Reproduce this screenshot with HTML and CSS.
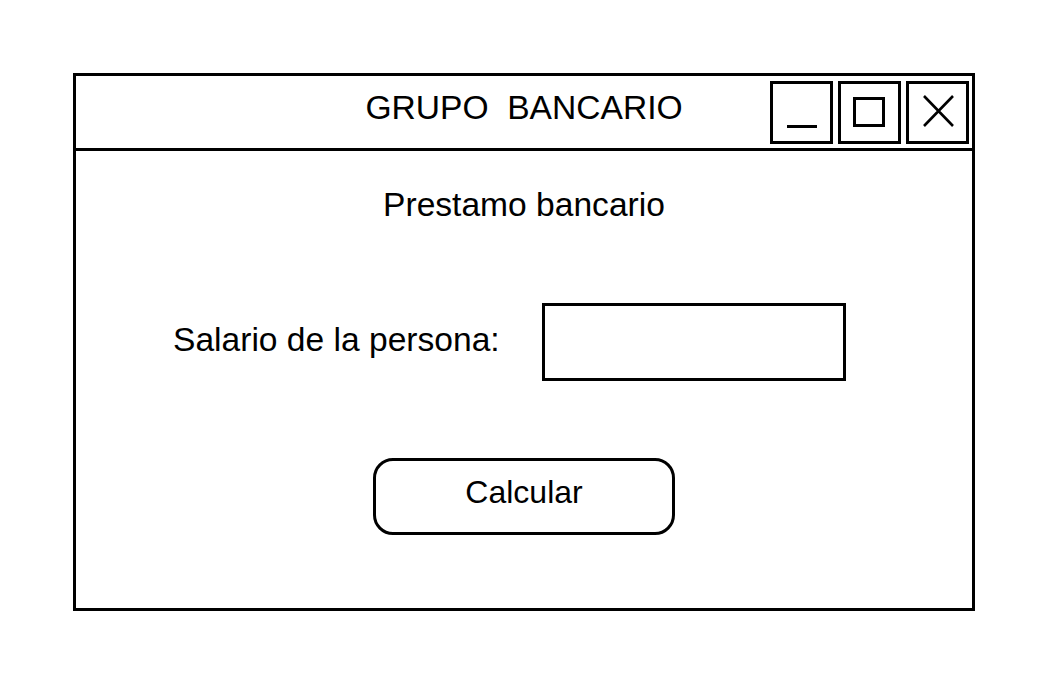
FILE: index.html
```html
<!DOCTYPE html>
<html lang="es">
<head>
    <meta charset="UTF-8">
    <meta name="viewport" content="width=device-width, initial-scale=1.0">
    <title>Grupo Bancario</title>
    <link rel="stylesheet" href="styles.css">
</head>
<body>
    <div class="window">
        <div class="titlebar">
            <div class="title">GRUPO&nbsp; BANCARIO</div>
            <div class="controls">
                <button class="ctrl" aria-label="Minimizar">
                    <svg viewBox="0 0 57 57" width="57" height="57"><line x1="14" y1="42.5" x2="44" y2="42.5" stroke="#000" stroke-width="3"/></svg>
                </button>
                <button class="ctrl" aria-label="Maximizar">
                    <svg viewBox="0 0 57 57" width="57" height="57"><rect x="13.5" y="14.5" width="29" height="27" fill="none" stroke="#000" stroke-width="3"/></svg>
                </button>
                <button class="ctrl" aria-label="Cerrar">
                    <svg viewBox="0 0 57 57" width="57" height="57"><path d="M15 12 L44 42 M44 12 L15 42" stroke="#000" stroke-width="2.6" fill="none"/></svg>
                </button>
            </div>
        </div>
        <div class="content">
            <h1 class="heading">Prestamo bancario</h1>
            <div class="field">
                <label class="label" for="salario">Salario de la persona:</label>
                <input class="input" id="salario" type="text">
            </div>
            <button class="btn">Calcular</button>
        </div>
    </div>
</body>
</html>
```

FILE: styles.css
```css
* {
    box-sizing: border-box;
}
html, body {
    margin: 0;
    padding: 0;
    background: #fff;
}
body {
    font-family: "Liberation Sans", Arial, sans-serif;
    color: #000;
    padding: 73px 0 0 73px;
}
.window {
    width: 902px;
    height: 538px;
    border: 3px solid #000;
    display: flex;
    flex-direction: column;
}
.titlebar {
    height: 75px;
    border-bottom: 3px solid #000;
    display: grid;
    grid-template-columns: 1fr auto 1fr;
    align-items: start;
}
.title {
    grid-column: 2;
    font-size: 33.6px;
    line-height: 36px;
    padding-top: 14px;
    white-space: nowrap;
}
.controls {
    grid-column: 3;
    justify-self: end;
    display: flex;
    gap: 5px;
    padding: 5px 3px 0 0;
}
.ctrl {
    width: 63px;
    height: 63px;
    border: 3px solid #000;
    background: #fff;
    padding: 0;
    margin: 0;
    display: block;
}
.ctrl svg {
    display: block;
}
.content {
    flex: 1;
    display: flex;
    flex-direction: column;
    align-items: center;
    padding-top: 36px;
}
.heading {
    margin: 0;
    font-size: 33.6px;
    font-weight: 400;
    line-height: 36px;
}
.field {
    align-self: stretch;
    display: flex;
    align-items: center;
    gap: 42px;
    padding-left: 97px;
    margin-top: 80px;
}
.label {
    font-size: 33.6px;
    line-height: 36px;
    position: relative;
    top: -2px;
}
.input {
    width: 304px;
    height: 78px;
    border: 3px solid #000;
    border-radius: 0;
    background: #fff;
    outline: none;
    font: inherit;
}
.btn {
    margin-top: 77px;
    width: 302px;
    height: 77px;
    border: 3px solid #000;
    border-radius: 20px;
    background: #fff;
    font-family: "Liberation Sans", Arial, sans-serif;
    font-size: 32px;
    color: #000;
    padding: 0 0 8px;
}
```
